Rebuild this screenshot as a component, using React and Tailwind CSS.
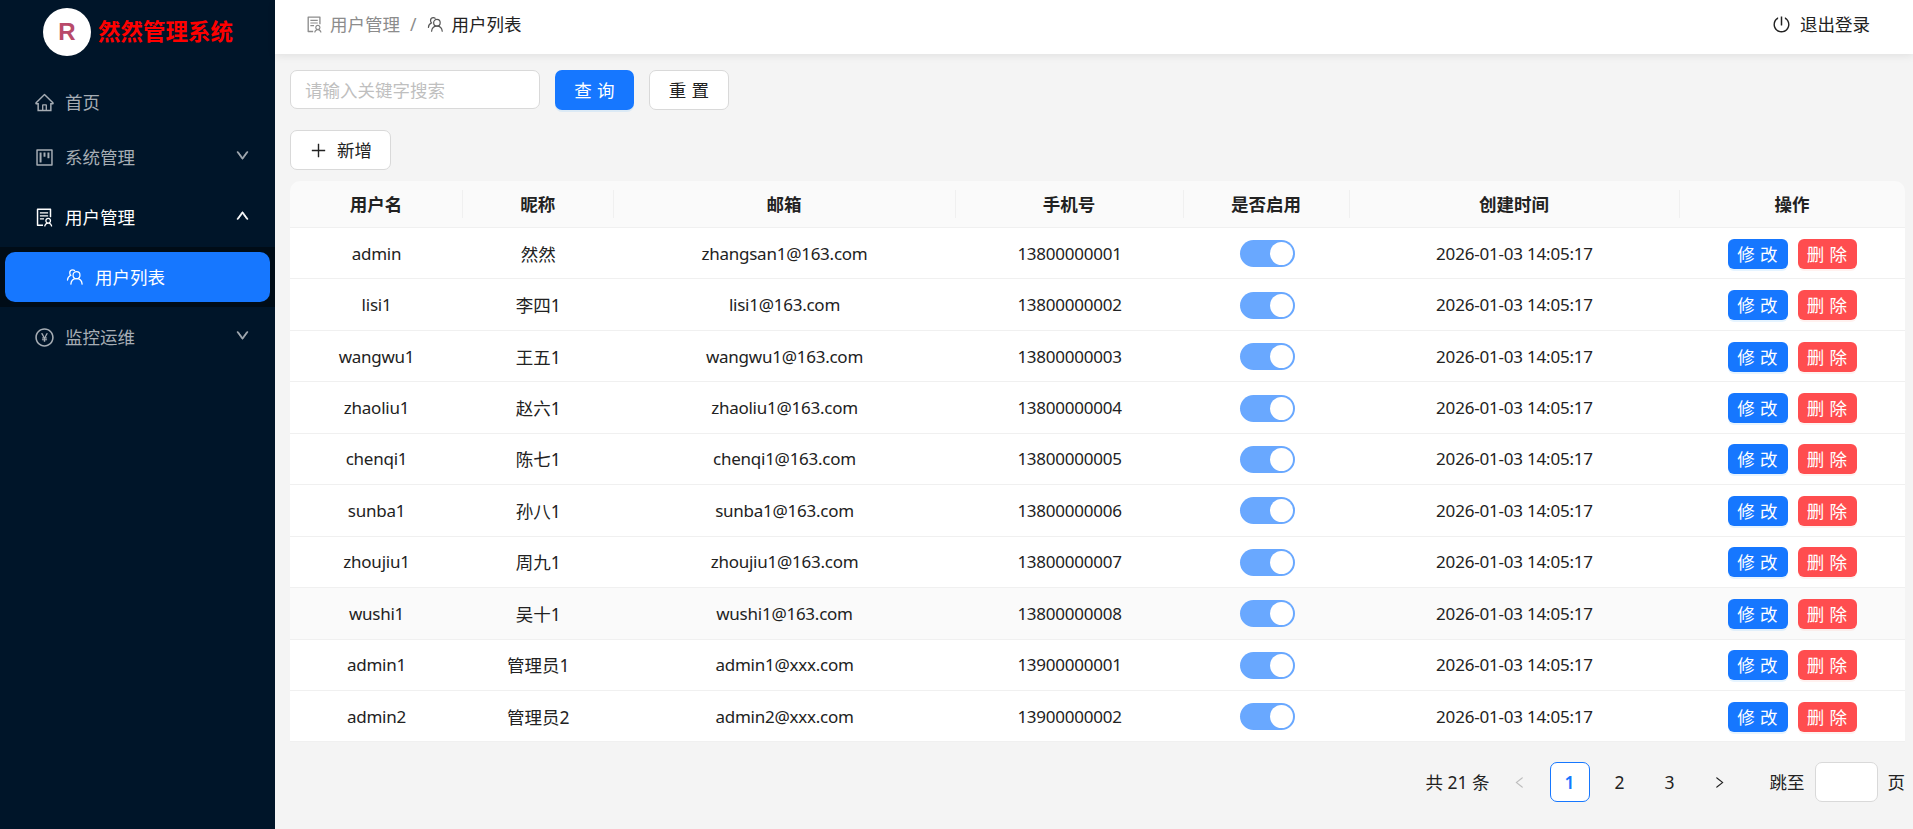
import {
  AiOutlineHome,
  AiOutlineProject,
  AiOutlineSolution,
  AiOutlinePayCircle,
  AiOutlinePoweroff,
  AiOutlinePlus,
  AiOutlineDown,
  AiOutlineUp,
  AiOutlineLeft,
  AiOutlineRight,
} from 'react-icons/ai';

const USERS = [
  ['admin', '然然', 'zhangsan1@163.com', '13800000001'],
  ['lisi1', '李四1', 'lisi1@163.com', '13800000002'],
  ['wangwu1', '王五1', 'wangwu1@163.com', '13800000003'],
  ['zhaoliu1', '赵六1', 'zhaoliu1@163.com', '13800000004'],
  ['chenqi1', '陈七1', 'chenqi1@163.com', '13800000005'],
  ['sunba1', '孙八1', 'sunba1@163.com', '13800000006'],
  ['zhoujiu1', '周九1', 'zhoujiu1@163.com', '13800000007'],
  ['wushi1', '吴十1', 'wushi1@163.com', '13800000008'],
  ['admin1', '管理员1', 'admin1@xxx.com', '13900000001'],
  ['admin2', '管理员2', 'admin2@xxx.com', '13900000002'],
];

const COLUMNS = ['用户名', '昵称', '邮箱', '手机号', '是否启用', '创建时间', '操作'];
const GRID = 'grid grid-cols-[173px_150.5px_342px_228px_166px_330px_1fr]';

function UsersIcon({ className }) {
  return (
    <svg viewBox="0 0 24 24" fill="none" stroke="currentColor" strokeWidth="1.7" strokeLinecap="round" className={className}>
      <circle cx="14" cy="9.5" r="4.6" />
      <path d="M6.500 21.500c.4-4.400 3.600-7.200 7.500-7.200s7.100 2.800 7.500 7.200" />
      <path d="M11.500 3.200C10.800 2.700 10 2.400 9 2.400 6.600 2.400 5 4.300 5 6.500c0 1.300.5 2.400 1.300 3.200C3.700 11 2.200 13.300 2 16" />
    </svg>
  );
}

function MenuItem({ icon: Icon, label, arrow, active }) {
  return (
    <div className={`flex h-[50px] items-center pl-[34px] pr-[25px] ${active ? 'text-white' : 'text-[#a6adb4]'}`}>
      <Icon className="h-[21px] w-[21px] shrink-0" />
      <span className="ml-[10px] flex-1 text-[17.5px]">{label}</span>
      {arrow === 'down' && <AiOutlineDown className="mb-[3px] h-[15px] w-[15px]" stroke="currentColor" strokeWidth="50" />}
      {arrow === 'up' && <AiOutlineUp className="mb-[3px] h-[15px] w-[15px]" stroke="currentColor" strokeWidth="50" />}
    </div>
  );
}

function Sidebar() {
  return (
    <aside className="flex w-[275px] shrink-0 flex-col bg-[#001529]">
      <div className="flex h-[64px] items-start pl-[43px] pt-2">
        <div className="flex h-12 w-12 items-center justify-center rounded-full bg-white font-['Liberation_Sans'] text-[24px] font-bold text-[#b84a6a]">
          R
        </div>
        <span className="ml-[7px] mt-[9px] text-[22.5px] leading-[30px] font-bold text-[#f00]">然然管理系统</span>
      </div>
      <div className="mt-[13px] flex flex-col">
        <MenuItem icon={AiOutlineHome} label="首页" />
        <div className="mt-[5px]">
          <MenuItem icon={AiOutlineProject} label="系统管理" arrow="down" />
        </div>
        <div className="mt-[10px]">
          <MenuItem icon={AiOutlineSolution} label="用户管理" arrow="up" active />
        </div>
        <div className="mt-[5px] bg-[#000c17] px-[5px] py-[5px]">
          <div className="flex h-[50px] items-center rounded-[10px] bg-[#1677ff] pl-[61px] text-white">
            <UsersIcon className="h-[18px] w-[18px]" />
            <span className="ml-[11px] text-[17.5px]">用户列表</span>
          </div>
        </div>
        <div className="mt-[5px]">
          <MenuItem icon={AiOutlinePayCircle} label="监控运维" arrow="down" />
        </div>
      </div>
    </aside>
  );
}

function Topbar() {
  return (
    <header className="flex h-[54px] shrink-0 items-center justify-between bg-white pb-[6px] pl-[30px] pr-[43px] shadow-[0_2px_8px_rgba(0,0,0,0.08)]">
      <div className="flex items-center text-[17.5px] text-[#8c8c8c]">
        <AiOutlineSolution className="h-[19px] w-[19px]" />
        <span className="ml-[6px]">用户管理</span>
        <span className="mx-[10px]">/</span>
        <UsersIcon className="h-[17px] w-[17px] text-[#555]" />
        <span className="ml-[8px] text-[#222]">用户列表</span>
      </div>
      <div className="flex items-center text-[17.5px] text-[#222]">
        <AiOutlinePoweroff className="h-[19px] w-[19px]" />
        <span className="ml-[9px]">退出登录</span>
      </div>
    </header>
  );
}

function Toggle() {
  return (
    <div className="ml-[1px] flex h-[27px] w-[55px] items-center justify-end rounded-full bg-[#69a8ff] pr-[2px]">
      <div className="h-[23px] w-[23px] rounded-full bg-white" />
    </div>
  );
}

function UserRow({ user, hovered }) {
  const [name, nick, mail, phone] = user;
  return (
    <div className={`${GRID} h-[51.45px] items-center border-b border-[#f0f0f0] pt-[1px] text-center ${hovered ? 'bg-[#fafafa]' : 'bg-white'}`}>
      <div className="tracking-[-0.25px]">{name}</div>
      <div className="text-[17.5px]">{nick}</div>
      <div className="tracking-[-0.25px]">{mail}</div>
      <div className="tracking-[-0.25px]">{phone}</div>
      <div className="flex justify-center"><Toggle /></div>
      <div className="tracking-[-0.2px]">2026-01-03 14:05:17</div>
      <div className="flex justify-center gap-[10px] text-[17.5px] tracking-[0.3px]">
        <button className="h-[30px] w-[60px] rounded-[6px] bg-[#1677ff] text-white shadow-[0_2px_0_rgba(5,145,255,0.1)]">修 改</button>
        <button className="h-[30px] w-[59px] rounded-[6px] bg-[#ff4d4f] text-white shadow-[0_2px_0_rgba(255,38,5,0.06)]">删 除</button>
      </div>
    </div>
  );
}

function UserTable() {
  return (
    <div className="mt-[11px] mr-[8.5px] overflow-hidden rounded-t-[10px] text-[17px] leading-[24px] text-[#222]">
      <div className={`${GRID} h-[47px] items-center border-b border-[#f0f0f0] bg-[#fafafa] text-center text-[17.5px] font-bold`}>
        {COLUMNS.map((col, i) => (
          <div key={col} className={`h-[28px] leading-[28px] ${i < COLUMNS.length - 1 ? 'border-r border-[#f0f0f0]' : ''}`}>
            {col}
          </div>
        ))}
      </div>
      {USERS.map((user) => (
        <UserRow key={user[0]} user={user} hovered={user[0] === 'wushi1'} />
      ))}
    </div>
  );
}

function Pagination() {
  return (
    <div className="mt-[20px] mr-[8px] flex items-center justify-end text-[17.5px] text-[#222]">
      <span>共 21 条</span>
      <div className="ml-[10px] flex h-10 w-10 items-center justify-center text-[#bdbdbd]"><AiOutlineLeft className="h-[15px] w-[15px]" /></div>
      <div className="ml-[10px] flex h-10 w-10 items-center justify-center rounded-[7px] border border-[#1677ff] bg-white font-semibold text-[#1677ff]">1</div>
      <div className="ml-[10px] flex h-10 w-10 items-center justify-center">2</div>
      <div className="ml-[10px] flex h-10 w-10 items-center justify-center">3</div>
      <div className="ml-[10px] flex h-10 w-10 items-center justify-center"><AiOutlineRight className="h-[15px] w-[15px]" /></div>
      <span className="ml-[30px]">跳至</span>
      <div className="ml-[10px] h-10 w-[63px] rounded-[7px] border border-[#d9d9d9] bg-white" />
      <span className="ml-[10px]">页</span>
    </div>
  );
}

export default function App() {
  return (
    <div className="flex h-[829px] overflow-hidden bg-[#f4f4f4] font-['Noto_Sans','Noto_Sans_CJK_SC',sans-serif]">
      <Sidebar />
      <main className="flex min-w-0 flex-1 flex-col">
        <Topbar />
        <div className="pl-[15px] pt-[16px]">
          <div className="flex items-start text-[17.5px]">
            <input
              placeholder="请输入关键字搜索"
              className="h-[39px] w-[250px] rounded-[7px] border border-[#d9d9d9] bg-white px-[14px] outline-none placeholder:text-[#bfbfbf]"
            />
            <button className="ml-[15px] h-10 w-[79px] rounded-[7px] bg-[#1677ff] tracking-[0.3px] text-white shadow-[0_2px_0_rgba(5,145,255,0.1)]">查 询</button>
            <button className="ml-[15px] h-10 w-[80px] rounded-[7px] border border-[#d9d9d9] bg-white tracking-[0.3px] text-[#222]">重 置</button>
          </div>
          <button className="mt-[20px] flex h-10 w-[101px] items-center justify-center rounded-[7px] border border-[#d9d9d9] bg-white text-[17.5px] text-[#222]">
            <AiOutlinePlus className="h-[19px] w-[19px]" />
            <span className="ml-[9px]">新增</span>
          </button>
          <UserTable />
          <Pagination />
        </div>
      </main>
    </div>
  );
}
